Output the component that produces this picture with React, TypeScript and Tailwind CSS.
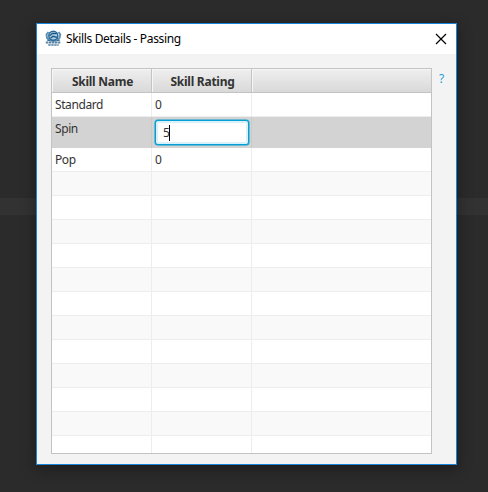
type Skill = { name: string; rating: string; editing?: boolean };

const skills: Skill[] = [
  { name: 'Standard', rating: '0' },
  { name: 'Spin', rating: '5', editing: true },
  { name: 'Pop', rating: '0' },
];

const emptyRows = Array.from({ length: 12 }, (_, i) => i);

function Crest() {
  return (
    <svg width="17" height="17" viewBox="0 0 17 17" fill="none" className="mt-[-2px] shrink-0">
      <path d="M3.500 2 1.500 4.500 2 8 4.500 10M13.500 2 15.300 4.500 14.500 8 12 10" stroke="#5e90b3" strokeWidth="1.900" />
      <circle cx="8.300" cy="5.800" r="4.500" fill="#b4cfe0" stroke="#2a6a99" strokeWidth="1.500" />
      <path d="M4.600 5.800 7.500 3.300l4.200.4M5.500 8.300 8 6.300l4 1" stroke="#17588a" strokeWidth="1.300" />
      <path d="M2 10c3.500 1.200 9.500 1.200 13 0" stroke="#2a6a99" strokeWidth="1.300" />
      <path d="M.8 12.500h15" stroke="#5a83a2" strokeWidth="1.800" strokeDasharray="2.500 .5" />
      <path d="M3.200 15h10.500" stroke="#5a83a2" strokeWidth="1.600" strokeDasharray="2.500 .5" />
    </svg>
  );
}

function TitleBar() {
  return (
    <div className="flex h-[30px] shrink-0 items-center bg-white pr-[9px] pl-[8px]">
      <Crest />
      <span className="ml-[4px] grow text-[12px] tracking-[-0.35px] text-black">Skills Details - Passing</span>
      <svg width="12" height="12" viewBox="0 0 12 12" className="mt-[-1px]">
        <path d="M1 1 11 11M11 1 1 11" stroke="#000" strokeWidth="1.200" />
      </svg>
    </div>
  );
}

function HeaderCell({ children }: { children?: string }) {
  return (
    <div className="flex items-center justify-center border-r border-b border-[#c3c3c3] bg-linear-to-b from-[#efefef] to-[#d9d9d9] pt-[3px] pl-[2px] text-[12px] leading-[16px] font-bold tracking-[-0.25px] text-[#333] shadow-[inset_1px_1px_0_#f6f6f6] last:border-r-0">
      {children}
    </div>
  );
}

function SkillRow({ name, rating, editing }: Skill) {
  const cell = editing ? 'border-r border-[#c9c9c9]' : 'border-r border-b border-[#ededed]';
  return (
    <div className={`grid shrink-0 grid-cols-[100px_100px_1fr] text-[12px] leading-[16px] text-[#333] ${editing ? 'h-[31px] bg-[#d3d3d3]' : 'h-[24px] bg-white'}`}>
      <div className={`${cell} pt-[4px] pl-[3px] tracking-[-0.4px]`}>{name}</div>
      {editing ? (
        <div className={`${cell} pt-[3px] pr-[2px] pl-[3px]`}>
          <div className="flex h-[25px] items-center rounded-[3px] border border-[#039ed3] bg-white pl-[7px] tracking-[-0.7px] shadow-[0_0_0_0.5px_#039ed3,inset_0_0_0_2px_#d9f1f9]">
            <span>{rating}</span>
            <span className="h-[16px] w-px bg-black" />
          </div>
        </div>
      ) : (
        <div className={`${cell} pt-[4px] pl-[3px]`}>{rating}</div>
      )}
      <div className={editing ? '' : 'border-b border-[#ededed]'} />
    </div>
  );
}

export default function App() {
  return (
    <div className="h-[492px] w-[488px] overflow-hidden bg-[linear-gradient(#2b2b2b_198px,#323232_198px,#323232_215px,#2b2b2b_215px)] pt-[23px] pl-[36px] font-['Noto_Sans','Open_Sans',sans-serif]">
      <div className="flex h-[442px] w-[421px] flex-col border border-[#1883d7] bg-[#f3f3f3] shadow-[0_4px_14px_rgba(0,0,0,0.35)]">
        <TitleBar />
        <div className="flex pt-[14px] pl-[14px]">
          <div className="flex h-[386px] w-[381px] flex-col overflow-hidden border border-[#c3c3c3] bg-white">
            <div className="grid h-[24px] shrink-0 grid-cols-[100px_100px_1fr]">
              <HeaderCell>Skill Name</HeaderCell>
              <HeaderCell>Skill Rating</HeaderCell>
              <HeaderCell />
            </div>
            {skills.map((skill) => (
              <SkillRow key={skill.name} {...skill} />
            ))}
            {emptyRows.map((i) => (
              <div key={i} className="grid h-[24px] shrink-0 grid-cols-[100px_100px_1fr] border-b border-[#ededed] odd:bg-[#f9f9f9] even:bg-white">
                <div className="border-r border-[#ededed]" />
                <div className="border-r border-[#ededed]" />
              </div>
            ))}
          </div>
          <span className="mt-[3px] ml-[7px] text-[12px] leading-[16px] text-[#1a9fd9]">?</span>
        </div>
      </div>
    </div>
  );
}
